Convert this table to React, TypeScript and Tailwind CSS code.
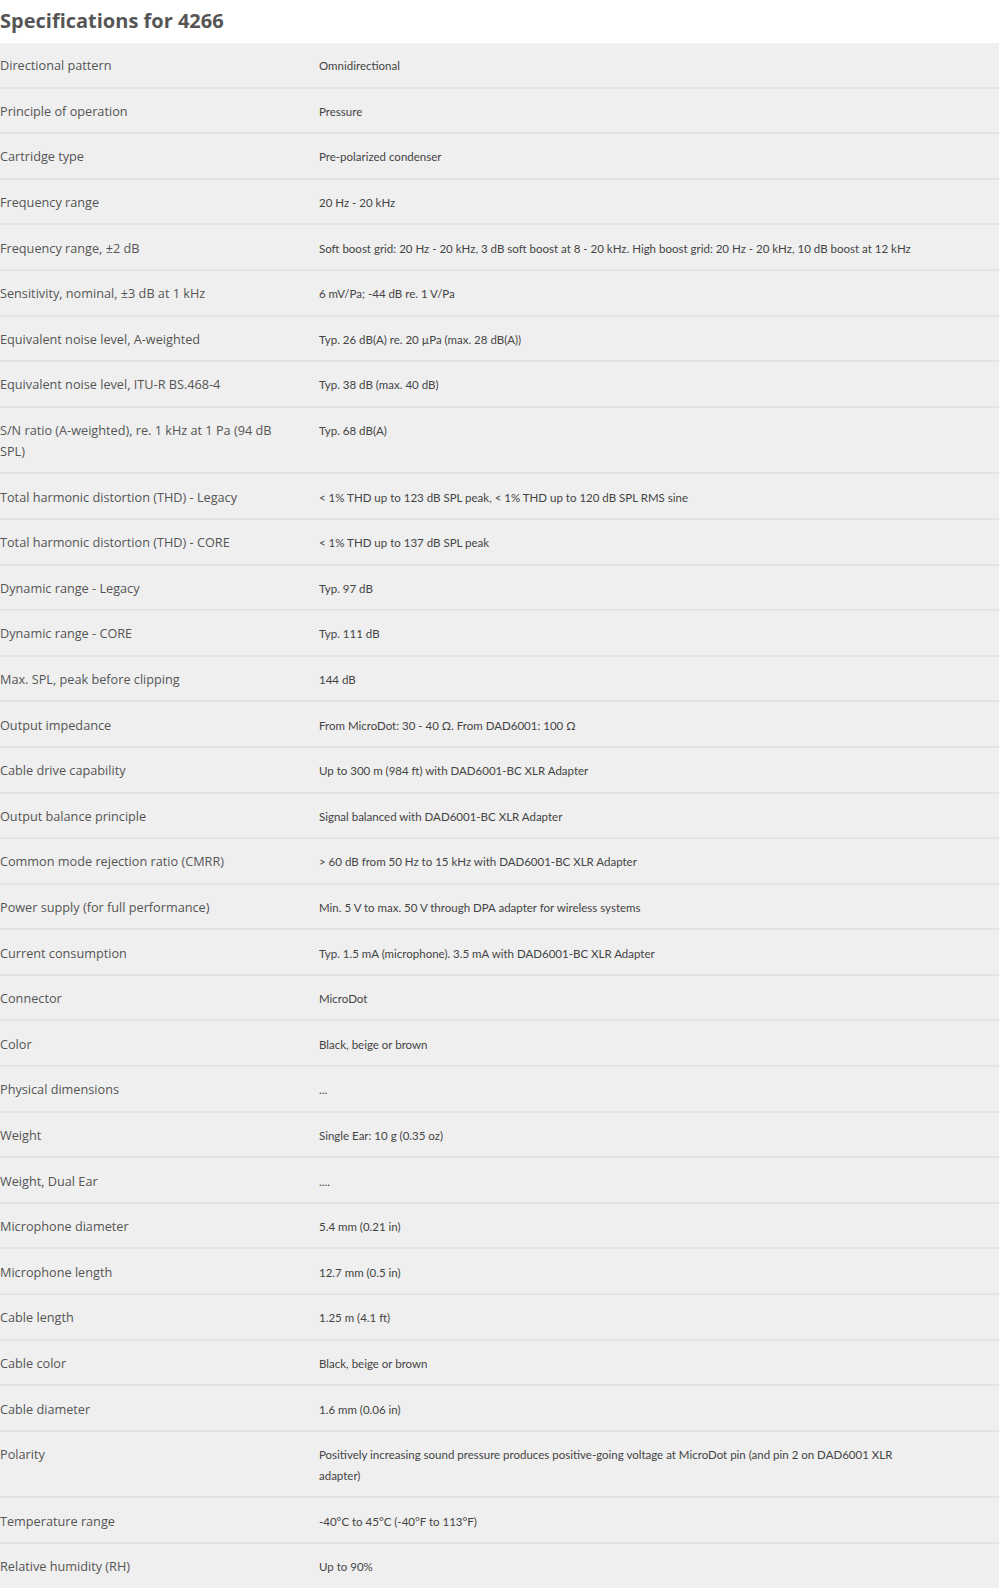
import React from "react";

type Row = { label: React.ReactNode; value: React.ReactNode };

const rows: Row[] = [
  { label: "Directional pattern", value: "Omnidirectional" },
  { label: "Principle of operation", value: "Pressure" },
  { label: "Cartridge type", value: "Pre-polarized condenser" },
  { label: "Frequency range", value: "20 Hz - 20 kHz" },
  {
    label: "Frequency range, ±2 dB",
    value:
      "Soft boost grid: 20 Hz - 20 kHz, 3 dB soft boost at 8 - 20 kHz. High boost grid: 20 Hz - 20 kHz, 10 dB boost at 12 kHz",
  },
  { label: "Sensitivity, nominal, ±3 dB at 1 kHz", value: "6 mV/Pa; -44 dB re. 1 V/Pa" },
  { label: "Equivalent noise level, A-weighted", value: "Typ. 26 dB(A) re. 20 µPa (max. 28 dB(A))" },
  { label: "Equivalent noise level, ITU-R BS.468-4", value: "Typ. 38 dB (max. 40 dB)" },
  {
    label: (
      <>
        S/N ratio (A-weighted), re. 1 kHz at 1 Pa (94 dB
        <br />
        SPL)
      </>
    ),
    value: "Typ. 68 dB(A)",
  },
  {
    label: "Total harmonic distortion (THD) - Legacy",
    value: "< 1% THD up to 123 dB SPL peak, < 1% THD up to 120 dB SPL RMS sine",
  },
  { label: "Total harmonic distortion (THD) - CORE", value: "< 1% THD up to 137 dB SPL peak" },
  { label: "Dynamic range - Legacy", value: "Typ. 97 dB" },
  { label: "Dynamic range - CORE", value: "Typ. 111 dB" },
  { label: "Max. SPL, peak before clipping", value: "144 dB" },
  { label: "Output impedance", value: "From MicroDot: 30 - 40 Ω. From DAD6001: 100 Ω" },
  { label: "Cable drive capability", value: "Up to 300 m (984 ft) with DAD6001-BC XLR Adapter" },
  { label: "Output balance principle", value: "Signal balanced with DAD6001-BC XLR Adapter" },
  {
    label: "Common mode rejection ratio (CMRR)",
    value: "> 60 dB from 50 Hz to 15 kHz with DAD6001-BC XLR Adapter",
  },
  {
    label: "Power supply (for full performance)",
    value: "Min. 5 V to max. 50 V through DPA adapter for wireless systems",
  },
  {
    label: "Current consumption",
    value: "Typ. 1.5 mA (microphone). 3.5 mA with DAD6001-BC XLR Adapter",
  },
  { label: "Connector", value: "MicroDot" },
  { label: "Color", value: "Black, beige or brown" },
  { label: "Physical dimensions", value: "..." },
  { label: "Weight", value: "Single Ear: 10 g (0.35 oz)" },
  { label: "Weight, Dual Ear", value: "...." },
  { label: "Microphone diameter", value: "5.4 mm (0.21 in)" },
  { label: "Microphone length", value: "12.7 mm (0.5 in)" },
  { label: "Cable length", value: "1.25 m (4.1 ft)" },
  { label: "Cable color", value: "Black, beige or brown" },
  { label: "Cable diameter", value: "1.6 mm (0.06 in)" },
  {
    label: "Polarity",
    value: (
      <>
        Positively increasing sound pressure produces positive-going voltage at MicroDot pin (and pin 2 on DAD6001 XLR
        <br />
        adapter)
      </>
    ),
  },
  { label: "Temperature range", value: "-40°C to 45°C (-40°F to 113°F)" },
  { label: "Relative humidity (RH)", value: "Up to 90%" },
];

export default function App() {
  return (
    <div className="w-[1000px] bg-white">
      <h2
        className="h-[43px] pt-[8px] text-[20px] leading-[26px] font-bold text-[#555555] whitespace-nowrap"
        style={{ fontFamily: '"Open Sans", "Noto Sans", sans-serif' }}
      >
        Specifications for 4266
      </h2>
      <div className="w-[999px] bg-[#efefef]">
        {rows.map((r, i) => (
          <div
            key={i}
            className="flex items-start border-b-2 border-[#e3e3e3] pt-[12.3px] pb-[10.3px] last:border-b-0"
          >
            <div
              className="w-[319px] shrink-0 text-[12.7px] leading-[21px] text-[#555555] whitespace-nowrap"
              style={{ fontFamily: '"Open Sans", "Noto Sans", sans-serif' }}
            >
              {r.label}
            </div>
            <div
              className="flex-1 text-[11.5px] leading-[21px] text-[#444444] whitespace-nowrap"
              style={{ fontFamily: 'Lato, "Liberation Sans", sans-serif' }}
            >
              {r.value}
            </div>
          </div>
        ))}
      </div>
    </div>
  );
}
